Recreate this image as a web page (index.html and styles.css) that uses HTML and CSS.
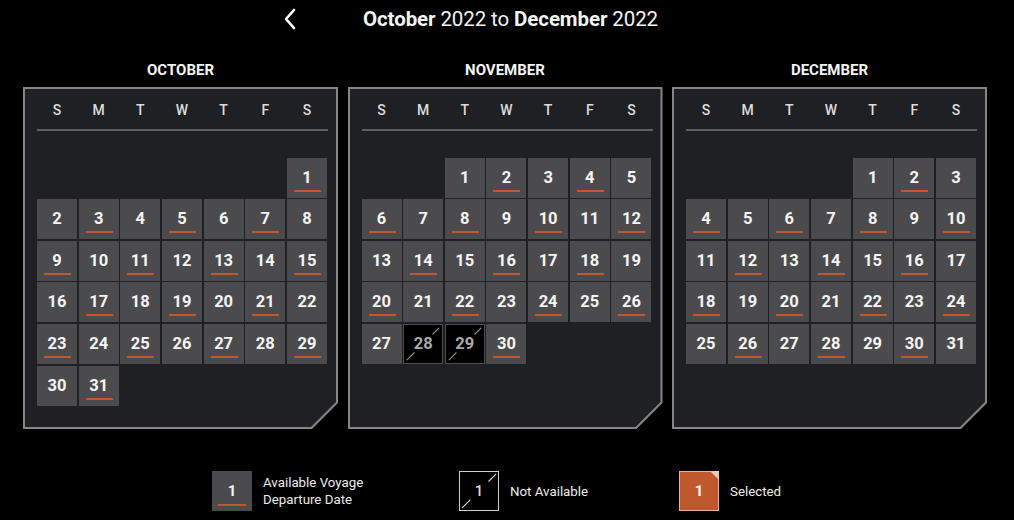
FILE: index.html
```html
<!DOCTYPE html>
<html>
<head>
<meta charset="utf-8">
<link rel="stylesheet" href="styles.css">
</head>
<body>
<header class="top">
  <svg class="back" width="14" height="22" viewBox="0 0 14 22"><polyline points="11,2 3,11 11,20" fill="none" stroke="#fff" stroke-width="2.6" stroke-linecap="round" stroke-linejoin="round"/></svg>
  <h1 class="range"><b>October</b> 2022 to <b>December</b> 2022</h1>
</header>

<main class="months">
  <section class="month">
    <h2 class="mname">OCTOBER</h2>
    <div class="panel"><div class="inner">
      <div class="days"><span>S</span><span>M</span><span>T</span><span>W</span><span>T</span><span>F</span><span>S</span></div>
      <div class="rule"></div>
      <div class="grid">
        <i></i><i></i><i></i><i></i><i></i><i></i><b class="c u">1</b>
        <b class="c">2</b><b class="c u">3</b><b class="c">4</b><b class="c u">5</b><b class="c">6</b><b class="c u">7</b><b class="c">8</b>
        <b class="c u">9</b><b class="c">10</b><b class="c u">11</b><b class="c">12</b><b class="c u">13</b><b class="c">14</b><b class="c u">15</b>
        <b class="c">16</b><b class="c u">17</b><b class="c">18</b><b class="c u">19</b><b class="c">20</b><b class="c u">21</b><b class="c">22</b>
        <b class="c u">23</b><b class="c">24</b><b class="c u">25</b><b class="c">26</b><b class="c u">27</b><b class="c">28</b><b class="c u">29</b>
        <b class="c">30</b><b class="c u">31</b>
      </div>
    </div></div>
  </section>

  <section class="month">
    <h2 class="mname">NOVEMBER</h2>
    <div class="panel"><div class="inner">
      <div class="days"><span>S</span><span>M</span><span>T</span><span>W</span><span>T</span><span>F</span><span>S</span></div>
      <div class="rule"></div>
      <div class="grid">
        <i></i><i></i><b class="c">1</b><b class="c u">2</b><b class="c">3</b><b class="c u">4</b><b class="c">5</b>
        <b class="c u">6</b><b class="c">7</b><b class="c u">8</b><b class="c">9</b><b class="c u">10</b><b class="c">11</b><b class="c u">12</b>
        <b class="c">13</b><b class="c u">14</b><b class="c">15</b><b class="c u">16</b><b class="c">17</b><b class="c u">18</b><b class="c">19</b>
        <b class="c u">20</b><b class="c">21</b><b class="c u">22</b><b class="c">23</b><b class="c u">24</b><b class="c">25</b><b class="c u">26</b>
        <b class="c">27</b>
        <b class="c na"><svg class="slash" viewBox="0 0 40 40"><line x1="3" y1="37" x2="11" y2="29"/><line x1="30" y1="10" x2="37" y2="3"/></svg><span>28</span></b>
        <b class="c na"><svg class="slash" viewBox="0 0 40 40"><line x1="3" y1="37" x2="11" y2="29"/><line x1="30" y1="10" x2="37" y2="3"/></svg><span>29</span></b>
        <b class="c u">30</b>
      </div>
    </div></div>
  </section>

  <section class="month">
    <h2 class="mname">DECEMBER</h2>
    <div class="panel"><div class="inner">
      <div class="days"><span>S</span><span>M</span><span>T</span><span>W</span><span>T</span><span>F</span><span>S</span></div>
      <div class="rule"></div>
      <div class="grid">
        <i></i><i></i><i></i><i></i><b class="c">1</b><b class="c u">2</b><b class="c">3</b>
        <b class="c u">4</b><b class="c">5</b><b class="c u">6</b><b class="c">7</b><b class="c u">8</b><b class="c">9</b><b class="c u">10</b>
        <b class="c">11</b><b class="c u">12</b><b class="c">13</b><b class="c u">14</b><b class="c">15</b><b class="c u">16</b><b class="c">17</b>
        <b class="c u">18</b><b class="c">19</b><b class="c u">20</b><b class="c">21</b><b class="c u">22</b><b class="c">23</b><b class="c u">24</b>
        <b class="c">25</b><b class="c u">26</b><b class="c">27</b><b class="c u">28</b><b class="c">29</b><b class="c u">30</b><b class="c">31</b>
      </div>
    </div></div>
  </section>
</main>

<footer class="legend">
  <div class="item item-avail">
    <b class="c u lg">1</b>
    <span class="ltext">Available Voyage<br>Departure Date</span>
  </div>
  <div class="item item-na">
    <b class="c lg lna"><svg class="slash" viewBox="0 0 40 40"><line x1="2" y1="38" x2="11" y2="29"/><line x1="30" y1="10" x2="38" y2="2"/></svg><span>1</span></b>
    <span class="ltext">Not Available</span>
  </div>
  <div class="item item-sel">
    <b class="c lg lsel">1</b>
    <span class="ltext">Selected</span>
  </div>
</footer>
</body>
</html>
```

FILE: styles.css
```css
* { box-sizing: border-box; }
html, body { margin: 0; padding: 0; background: #000; }
body {
  width: 1014px;
  height: 520px;
  overflow: hidden;
  font-family: Roboto, "Liberation Sans", sans-serif;
  color: #f2f2f2;
}

.top {
  height: 38px;
  display: flex;
  align-items: center;
  padding-left: 283px;
}
.back { display: block; margin-top: -1px; }
.range {
  margin: 0 0 0 66px;
  font-size: 20.5px;
  font-weight: 400;
  letter-spacing: -0.1px;
  color: #f4f4f4;
}
.range b { font-weight: 700; }

.months {
  display: flex;
  gap: 9.5px;
  padding-left: 23px;
  margin-top: 22px;
}
.month { width: 315px; }
.mname {
  margin: 0;
  height: 20px;
  line-height: 20px;
  text-align: center;
  font-size: 15px;
  font-weight: 700;
  color: #f4f4f4;
}

.panel {
  margin-top: 7px;
  height: 342px;
  background: #858585;
  padding: 2px;
  clip-path: polygon(0 0, 100% 0, 100% calc(100% - 26px), calc(100% - 26px) 100%, 0 100%);
}
.inner {
  height: 100%;
  background: #1f2023;
  padding: 10px 9px 0 12px;
  clip-path: polygon(0 0, 100% 0, 100% calc(100% - 25px), calc(100% - 25px) 100%, 0 100%);
}

.days {
  display: grid;
  grid-template-columns: repeat(7, 40px);
  column-gap: 1.67px;
  height: 22px;
  align-items: center;
}
.days span {
  text-align: center;
  font-size: 14px;
  font-weight: 500;
  color: #dcdcdc;
}
.rule {
  margin-top: 8px;
  height: 1.5px;
  width: 291px;
  background: #5e5e60;
}

.grid {
  margin-top: 27px;
  display: grid;
  grid-template-columns: repeat(7, 40px);
  grid-auto-rows: 40px;
  gap: 1.67px;
}
.grid i { display: block; }

.c {
  position: relative;
  display: flex;
  align-items: center;
  justify-content: center;
  width: 40px;
  height: 40px;
  background: #4b4b4d;
  font-size: 16.5px;
  font-weight: 700;
  color: #f4f4f4;
  padding-bottom: 1px;
}
.c.u::after {
  content: "";
  position: absolute;
  left: 7px;
  right: 6px;
  bottom: 6px;
  height: 2px;
  background: #c2592e;
}
.c.na {
  background: #000;
  border: 1px solid #4d4d4f;
  color: #a9a9a9;
}
.slash {
  position: absolute;
  left: 0;
  top: 0;
  width: 100%;
  height: 100%;
}
.slash line { stroke: #8a8a8a; stroke-width: 1.3; }
.c span { position: relative; }

.legend {
  display: flex;
  align-items: center;
  padding-left: 212px;
  margin-top: 42px;
}
.item { display: flex; align-items: center; }
.item-avail { width: 247px; }
.item-na { width: 220px; }
.ltext {
  margin-left: 11px;
  font-size: 13.3px;
  line-height: 17px;
  color: #ececec;
}
.lg { width: 40px; height: 40px; font-size: 15px; }
.lg.u::after { left: 6px; right: 6px; bottom: 5px; }
.lna {
  background: #000;
  border: 1.3px solid #cfcfcf;
  color: #d8d8d8;
  font-weight: 500;
}
.lna .slash line { stroke: #d0d0d0; stroke-width: 1.2; }
.lsel {
  background: #c0582d;
  border: 1px solid #e2b3a0;
  color: #fff;
}
.lsel::before {
  content: "";
  position: absolute;
  right: -1px;
  top: -1px;
  border-style: solid;
  border-width: 0 9px 9px 0;
  border-color: transparent #e8c5b5 transparent transparent;
}
```
